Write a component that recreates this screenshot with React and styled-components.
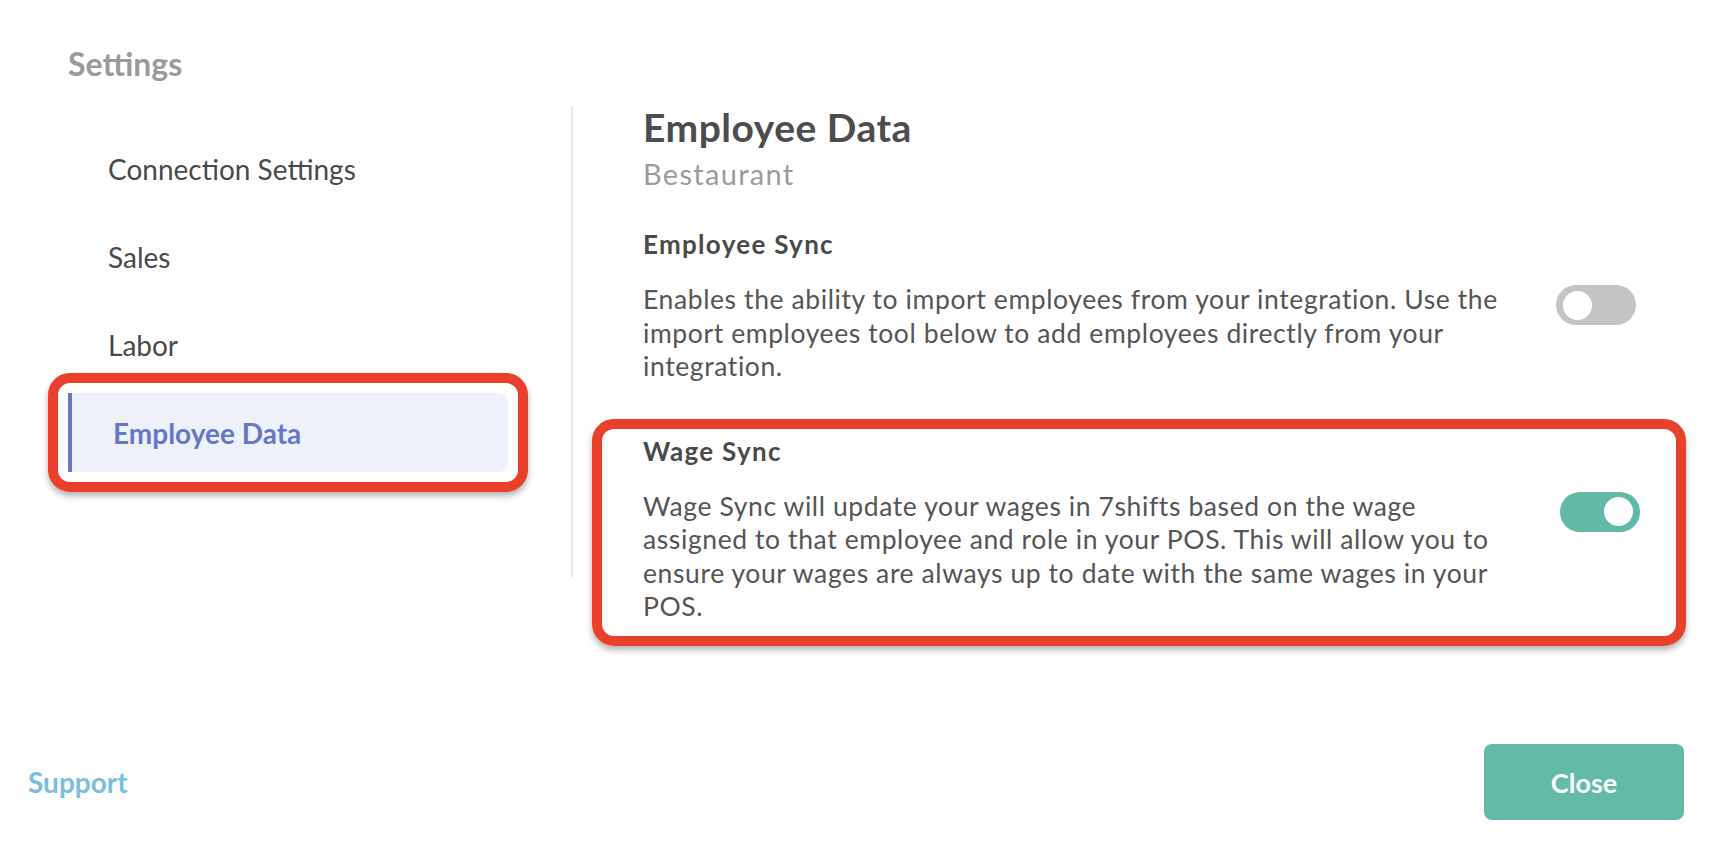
import React from 'react';
import styled, { createGlobalStyle } from 'styled-components';

const GlobalStyle = createGlobalStyle`
  html, body {
    margin: 0;
    padding: 0;
    background: #ffffff;
  }
  body {
    font-family: Lato, "Open Sans", Arial, sans-serif;
    -webkit-font-smoothing: antialiased;
  }
`;

const Page = styled.div`
  width: 1732px;
  height: 848px;
  display: flex;
  flex-direction: column;
  background: #ffffff;
  overflow: hidden;
`;

const Header = styled.header`
  padding: 45px 0 0 68px;
`;

const PageTitle = styled.h1`
  margin: 0;
  font-size: 32px;
  line-height: 38px;
  font-weight: 700;
  color: #9a9a9a;
`;

const Body = styled.div`
  display: flex;
  margin-top: 23px;
  height: 471px;
`;

const Sidebar = styled.nav`
  width: 573px;
  flex: none;
  box-sizing: border-box;
  border-right: 2px solid #e6e6e6;
  padding: 23px 0 0 68px;
  display: flex;
  flex-direction: column;
  gap: 9px;
`;

const NavItem = styled.div`
  width: 440px;
  height: 79px;
  box-sizing: border-box;
  display: flex;
  align-items: center;
  padding-left: ${(p) => (p.$active ? '41px' : '40px')};
  border-left: ${(p) => (p.$active ? '4px solid #6677c4' : 'none')};
  border-radius: ${(p) => (p.$active ? '0 9px 9px 0' : '0')};
  background: ${(p) => (p.$active ? '#eef1f9' : 'transparent')};
  color: ${(p) => (p.$active ? '#6677c4' : '#4a4a4a')};
  font-size: 28px;
  font-weight: ${(p) => (p.$active ? 700 : 400)};
  cursor: pointer;
`;

const NavHighlight = styled.div`
  margin: -20px;
  padding: 10px;
  border: 10px solid #e8402a;
  border-radius: 22px;
  box-shadow: 0 4px 6px rgba(0, 0, 0, 0.3);
  width: fit-content;
`;

const Main = styled.main`
  flex: none;
  width: 993px;
  padding-left: 70px;
`;

const Heading = styled.h2`
  margin: 0;
  font-size: 39px;
  line-height: 43px;
  font-weight: 700;
  letter-spacing: 0.5px;
  color: #4d4d4d;
`;

const Subheading = styled.div`
  margin-top: 9px;
  font-size: 29px;
  line-height: 31px;
  letter-spacing: 1.3px;
  color: #9b9b9b;
`;

const Section = styled.section`
  margin-top: ${(p) => p.$gap || '0px'};
`;

const SectionTitle = styled.h3`
  margin: 0;
  font-size: 26px;
  line-height: 29px;
  font-weight: 700;
  letter-spacing: 1.3px;
  color: #4a4a4a;
`;

const SectionRow = styled.div`
  display: flex;
  align-items: flex-start;
  justify-content: space-between;
  margin-top: 24px;
`;

const Description = styled.p`
  margin: 0;
  max-width: 860px;
  font-size: 26.5px;
  line-height: 33.5px;
  letter-spacing: 0.6px;
  color: #555555;
`;

const Toggle = styled.div`
  flex-shrink: 0;
  width: 80px;
  height: 40px;
  margin-top: 2px;
  margin-right: ${(p) => (p.$on ? '-4px' : '0')};
  border-radius: 20px;
  box-sizing: border-box;
  padding: 0 7px;
  display: flex;
  align-items: center;
  justify-content: ${(p) => (p.$on ? 'flex-end' : 'flex-start')};
  background: ${(p) => (p.$on ? '#62b9a6' : '#c4c4c4')};
  cursor: pointer;

  &::after {
    content: '';
    width: 29px;
    height: 29px;
    border-radius: 50%;
    background: #ffffff;
  }
`;

const Highlight = styled.div`
  margin: 35px -50px 0 -51px;
  padding: 8px 40px 12px 41px;
  border: 10px solid #e8402a;
  border-radius: 22px;
  box-shadow: 0 4px 6px rgba(0, 0, 0, 0.3);
`;

const Footer = styled.footer`
  margin-top: auto;
  display: flex;
  align-items: center;
  justify-content: space-between;
  padding: 0 48px 28px 28px;
`;

const SupportLink = styled.a`
  font-size: 28px;
  font-weight: 700;
  color: #78bfe0;
  text-decoration: none;
  cursor: pointer;
`;

const CloseButton = styled.button`
  width: 200px;
  height: 76px;
  border: none;
  border-radius: 8px;
  background: #62baa7;
  color: #ffffff;
  font-family: inherit;
  font-size: 27px;
  font-weight: 700;
  cursor: pointer;
`;

const navItems = ['Connection Settings', 'Sales', 'Labor', 'Employee Data'];

export default function App() {
  return (
    <Page>
      <GlobalStyle />
      <Header>
        <PageTitle>Settings</PageTitle>
      </Header>
      <Body>
        <Sidebar>
          {navItems.map((item) =>
            item === 'Employee Data' ? (
              <NavHighlight key={item}>
                <NavItem $active>{item}</NavItem>
              </NavHighlight>
            ) : (
              <NavItem key={item}>{item}</NavItem>
            )
          )}
        </Sidebar>
        <Main>
          <Heading>Employee Data</Heading>
          <Subheading>Bestaurant</Subheading>

          <Section $gap="41px">
            <SectionTitle>Employee Sync</SectionTitle>
            <SectionRow>
              <Description>
                Enables the ability to import employees from your integration. Use the
                import employees tool below to add employees directly from your
                integration.
              </Description>
              <Toggle />
            </SectionRow>
          </Section>

          <Highlight>
            <Section>
              <SectionTitle>Wage Sync</SectionTitle>
              <SectionRow>
                <Description>
                  Wage Sync will update your wages in 7shifts based on the wage
                  assigned to that employee and role in your POS. This will allow you to
                  ensure your wages are always up to date with the same wages in your
                  POS.
                </Description>
                <Toggle $on />
              </SectionRow>
            </Section>
          </Highlight>
        </Main>
      </Body>
      <Footer>
        <SupportLink>Support</SupportLink>
        <CloseButton>Close</CloseButton>
      </Footer>
    </Page>
  );
}
